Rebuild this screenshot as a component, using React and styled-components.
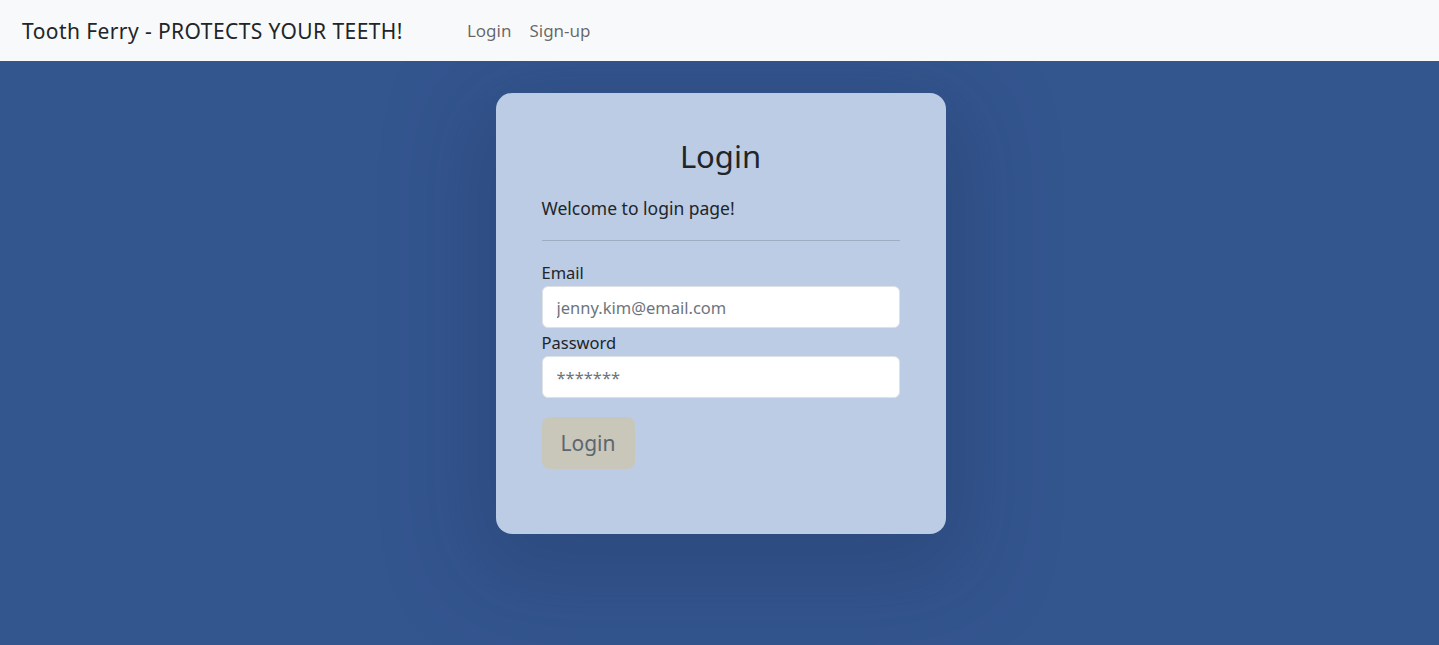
import React from "react";
import styled, { createGlobalStyle } from "styled-components";

const Global = createGlobalStyle`
  html, body { margin: 0; padding: 0; }
  body {
    background: #34568f;
    font-family: "Noto Sans", "Open Sans", sans-serif;
    color: #212529;
  }
  * { box-sizing: border-box; }
`;

const Page = styled.div`
  min-height: 645px;
  background: #34568f;
  display: flex;
  flex-direction: column;
`;

const Navbar = styled.nav`
  position: relative;
  z-index: 1;
  height: 61px;
  background: #f8f9fa;
  display: flex;
  align-items: center;
  padding: 0 22px;
`;

const Brand = styled.a`
  font-size: 21px;
  color: #212529;
  text-decoration: none;
  margin-right: 64px;
  letter-spacing: 0.42px;
`;

const NavLinks = styled.div`
  display: flex;
  gap: 18px;
`;

const NavLink = styled.a`
  font-size: 17px;
  color: rgba(0, 0, 0, 0.6);
  text-decoration: none;
`;

const Main = styled.main`
  display: flex;
  justify-content: center;
  padding-top: 32px;
  padding-left: 2px;
`;

const Card = styled.div`
  width: 450px;
  height: 441px;
  background: #bbcce4;
  border-radius: 16px;
  padding: 42px 46px;
  box-shadow: 0 24px 90px 24px rgba(20, 40, 80, 0.25);
`;

const Title = styled.h2`
  margin: 0 0 18px;
  text-align: center;
  font-weight: 400;
  font-size: 31px;
  line-height: 42px;
  color: #212529;
`;

const Welcome = styled.p`
  margin: 0;
  font-size: 17.5px;
  line-height: 26px;
  color: #212529;
`;

const Divider = styled.hr`
  margin: 19px 0 20px;
  border: 0;
  border-top: 1px solid rgba(0, 0, 0, 0.15);
`;

const Label = styled.label`
  display: block;
  font-size: 16.5px;
  line-height: 24px;
  color: #212529;
  margin-bottom: 1px;
`;

const Input = styled.input`
  display: block;
  width: 100%;
  height: 42px;
  border: 1px solid #dee2e6;
  border-radius: 6px;
  background: #fff;
  padding: 0 14px;
  font-family: inherit;
  font-size: ${(p) => (p.$small ? "14px" : "16.5px")};
  color: #495057;
  margin-bottom: ${(p) => (p.$last ? "19px" : "3px")};
  outline: none;
  &::placeholder { color: #6c757d; }
`;

const Button = styled.button`
  width: 93px;
  height: 52px;
  border: none;
  border-radius: 8px;
  background: #c8c7ba;
  color: #5d6670;
  font-family: inherit;
  font-size: 21px;
`;

export default function App() {
  return (
    <Page>
      <Global />
      <Navbar>
        <Brand href="#">Tooth Ferry - PROTECTS YOUR TEETH!</Brand>
        <NavLinks>
          <NavLink href="#">Login</NavLink>
          <NavLink href="#">Sign-up</NavLink>
        </NavLinks>
      </Navbar>
      <Main>
        <Card>
          <Title>Login</Title>
          <Welcome>Welcome to login page!</Welcome>
          <Divider />
          <Label>Email</Label>
          <Input type="email" placeholder="jenny.kim@email.com" />
          <Label>Password</Label>
          <Input type="text" placeholder="*******" $last />
          <Button>Login</Button>
        </Card>
      </Main>
    </Page>
  );
}
